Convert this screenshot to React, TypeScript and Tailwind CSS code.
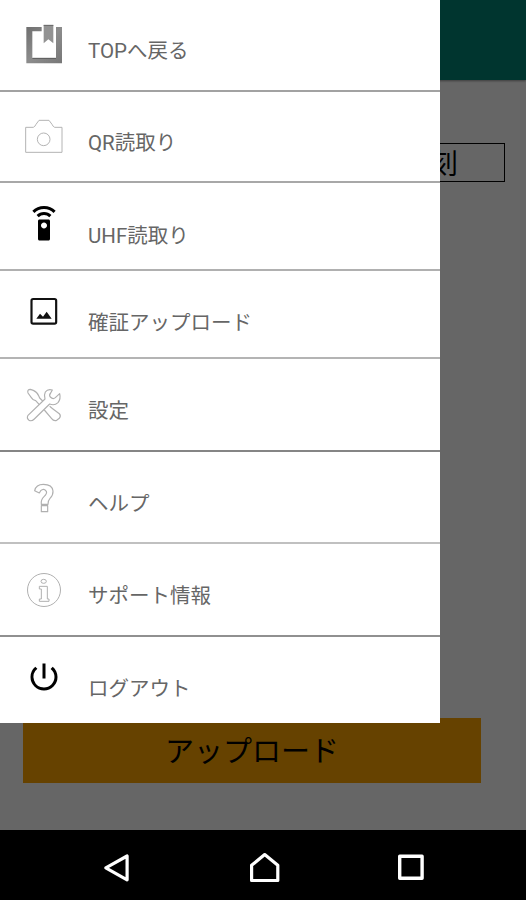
import React from "react"
import { MdPowerSettingsNew, MdSettingsRemote } from "react-icons/md";

const BookmarkIcon = () => {
    return (
        <svg viewBox="60 63 144 144" className="w-12 h-12">
            <defs>
                <linearGradient id="frame" x1="0" y1="0" x2="1" y2="1">
                    <stop offset="0" stopColor="#6f6f6f"/>
                    <stop offset="0.5" stopColor="#8c8c8c"/>
                    <stop offset="1" stopColor="#777777"/>
                </linearGradient>
            </defs>
            <path d="M79 81H125V94H97V175H168V81H186V190H79Z" fill="url(#frame)"/>
            <path d="M97 175H168" stroke="#555555" strokeWidth="3"/>
            <path d="M131 75H160V130L145 118L131 130Z" fill="#929292"/>
            <path d="M131 76H160" stroke="#666666" strokeWidth="3"/>
        </svg>
    )
}

const CameraIcon = () => {
    return (
        <svg viewBox="60 339 144 144" className="w-12 h-12" fill="none" stroke="#b4b4b4" strokeWidth="3" strokeLinejoin="round">
            <path d="M77 382H100Q105 380 108 373L117 361H147L156 373Q159 380 164 382H186V457H77Z"/>
            <circle cx="131" cy="418" r="19"/>
        </svg>
    )
}

const ImageIcon = () => {
    return (
        <svg viewBox="60 321 144 144" className="w-12 h-12">
            <rect x="94.5" y="357" width="74" height="74" rx="5" fill="none" stroke="#111111" strokeWidth="6.5"/>
            <path d="M109 416L120 401L129 410L140 395L155 416Z" fill="#111111"/>
        </svg>
    )
}

const ToolsIcon = () => {
    return (
        <svg viewBox="60 78 144 144" className="w-12 h-12" fill="none" stroke="#b0b0b0" strokeWidth="3.5" strokeLinejoin="round">
            <path d="M118 149L107 137Q99 136 94 128L84 114Q81 103 91 103L100 106Q111 110 116 122L119 129L128 138"/>
            <path d="M133 165L155 191Q161 199 170 196L178 190Q184 183 178 176L158 161L149 154"/>
            <path d="M157 105Q143 101 136 111Q131 120 135 132L84 181Q79 190 87 196Q95 200 103 192L149 147Q163 153 174 143Q183 132 179 116L166 128Q159 134 151 126Q146 121 152 114Z"/>
        </svg>
    )
}

const HelpIcon = () => {
    return (
        <svg viewBox="60 357 144 144" className="w-12 h-12" fill="none" stroke="#b0b0b0" strokeWidth="3.5" strokeLinejoin="round">
            <path d="M104 407Q108 388 130 388Q157 388 159 408Q160 420 150 430Q143 438 144 448H124Q122 434 132 425Q142 416 139 409Q132 398 122 407L118 414Z"/>
            <path d="M124 452H143V470H124Z"/>
        </svg>
    )
}

const InfoIcon = () => {
    return (
        <svg viewBox="60 78 144 144" className="w-12 h-12" fill="none" stroke="#b0b0b0" strokeWidth="3" strokeLinejoin="round">
            <circle cx="132" cy="150" r="49.5"/>
            <ellipse cx="131" cy="124" rx="8" ry="6"/>
            <path d="M118 139H142V177H147V184H118V177H124V147H118Z"/>
        </svg>
    )
}

const menuItems = [
    { label: "TOPへ戻る", icon: <BookmarkIcon/>, row: "h-[92px] border-b-2 border-[#a2a2a2]", iconBox: "mt-[21px]", text: "mt-[36px]" },
    { label: "QR読取り", icon: <CameraIcon/>, row: "h-[91px] border-b-2 border-[#a8a8a8]", iconBox: "mt-[21px]", text: "mt-[36px]" },
    { label: "UHF読取り", icon: <MdSettingsRemote className="w-9 h-9 text-black"/>, row: "h-[88px] border-b-2 border-[#b0b0b0]", iconBox: "mt-[17px]", text: "mt-[38px]" },
    { label: "確証アップロード", icon: <ImageIcon/>, row: "h-[88px] border-b-2 border-[#b4b4b4]", iconBox: "mt-[16px]", text: "mt-[37px]" },
    { label: "設定", icon: <ToolsIcon/>, row: "h-[93px] border-b-2 border-[#858585]", iconBox: "mt-[22px]", text: "mt-[37px]" },
    { label: "ヘルプ", icon: <HelpIcon/>, row: "h-[92px] border-b-2 border-[#c0c0c0]", iconBox: "mt-[22px]", text: "mt-[37px]" },
    { label: "サポート情報", icon: <InfoIcon/>, row: "h-[93px] border-b-2 border-[#909090]", iconBox: "mt-[22px]", text: "mt-[37px]" },
    { label: "ログアウト", icon: <MdPowerSettingsNew className="w-9 h-9 text-black"/>, row: "h-[86px]", iconBox: "mt-[16px]", text: "mt-[37px]" },
]

const MenuRow = ({ label, icon, row, iconBox, text }: (typeof menuItems)[number]) => {
    return (
        <li className={`flex items-start ${row}`}>
            <div className={`flex items-center justify-center w-12 h-12 ml-5 ${iconBox}`}>{icon}</div>
            <div className={`ml-5 h-[30px] text-[20.5px] leading-[30px] text-[#666666] whitespace-nowrap ${text}`}>{label}</div>
        </li>
    )
}

const NavBar = () => {
    return (
        <div className="flex gap-[115px] h-[70px] shrink-0 bg-black pl-[101px] pt-[22px]">
            <svg viewBox="0 0 32 32" className="w-8 h-8" fill="none" stroke="white" strokeWidth="3.2" strokeLinejoin="round">
                <path d="M4.8 15.8L26.1 4V27.8Z"/>
            </svg>
            <svg viewBox="0 0 32 32" className="w-8 h-8" fill="none" stroke="white" strokeWidth="3.2" strokeLinejoin="round">
                <path d="M16.7 2.6L29.8 13.3V28.5H3.6V13.3Z"/>
            </svg>
            <svg viewBox="0 0 32 32" className="w-8 h-8" fill="none" stroke="white" strokeWidth="3.4" strokeLinejoin="round">
                <path d="M4.7 4.3H27.1V26.3H4.7Z"/>
            </svg>
        </div>
    )
}

export default function App() {
    return (
        <div className="relative flex flex-col w-[526px] h-[900px] overflow-hidden bg-[#666666] font-[Roboto,'Noto_Sans_CJK_JP',sans-serif]">
            <div className="h-20 shrink-0 bg-[#00352f] shadow-[0_1px_2px_#00000066]"/>

            <div className="flex flex-col flex-1 pl-6">
                <div className="flex items-center justify-end mt-[63px] w-[481px] h-[39px] border-[1.5px] border-black pt-1 pr-[46px] text-[28px] text-black">刻</div>
                <button className="mt-[536px] -ml-px w-[458px] h-[65px] bg-[#664200] pt-1 text-[29px] text-black">アップロード</button>
            </div>

            <NavBar/>

            {/* ドロワーメニュー */}
            <ul className="absolute left-0 top-0 w-[440px] h-[723px] bg-white">
                {menuItems.map((each, index) => {
                    return (
                        <MenuRow key={index} {...each}/>
                    )
                })}
            </ul>
        </div>
    )
}
